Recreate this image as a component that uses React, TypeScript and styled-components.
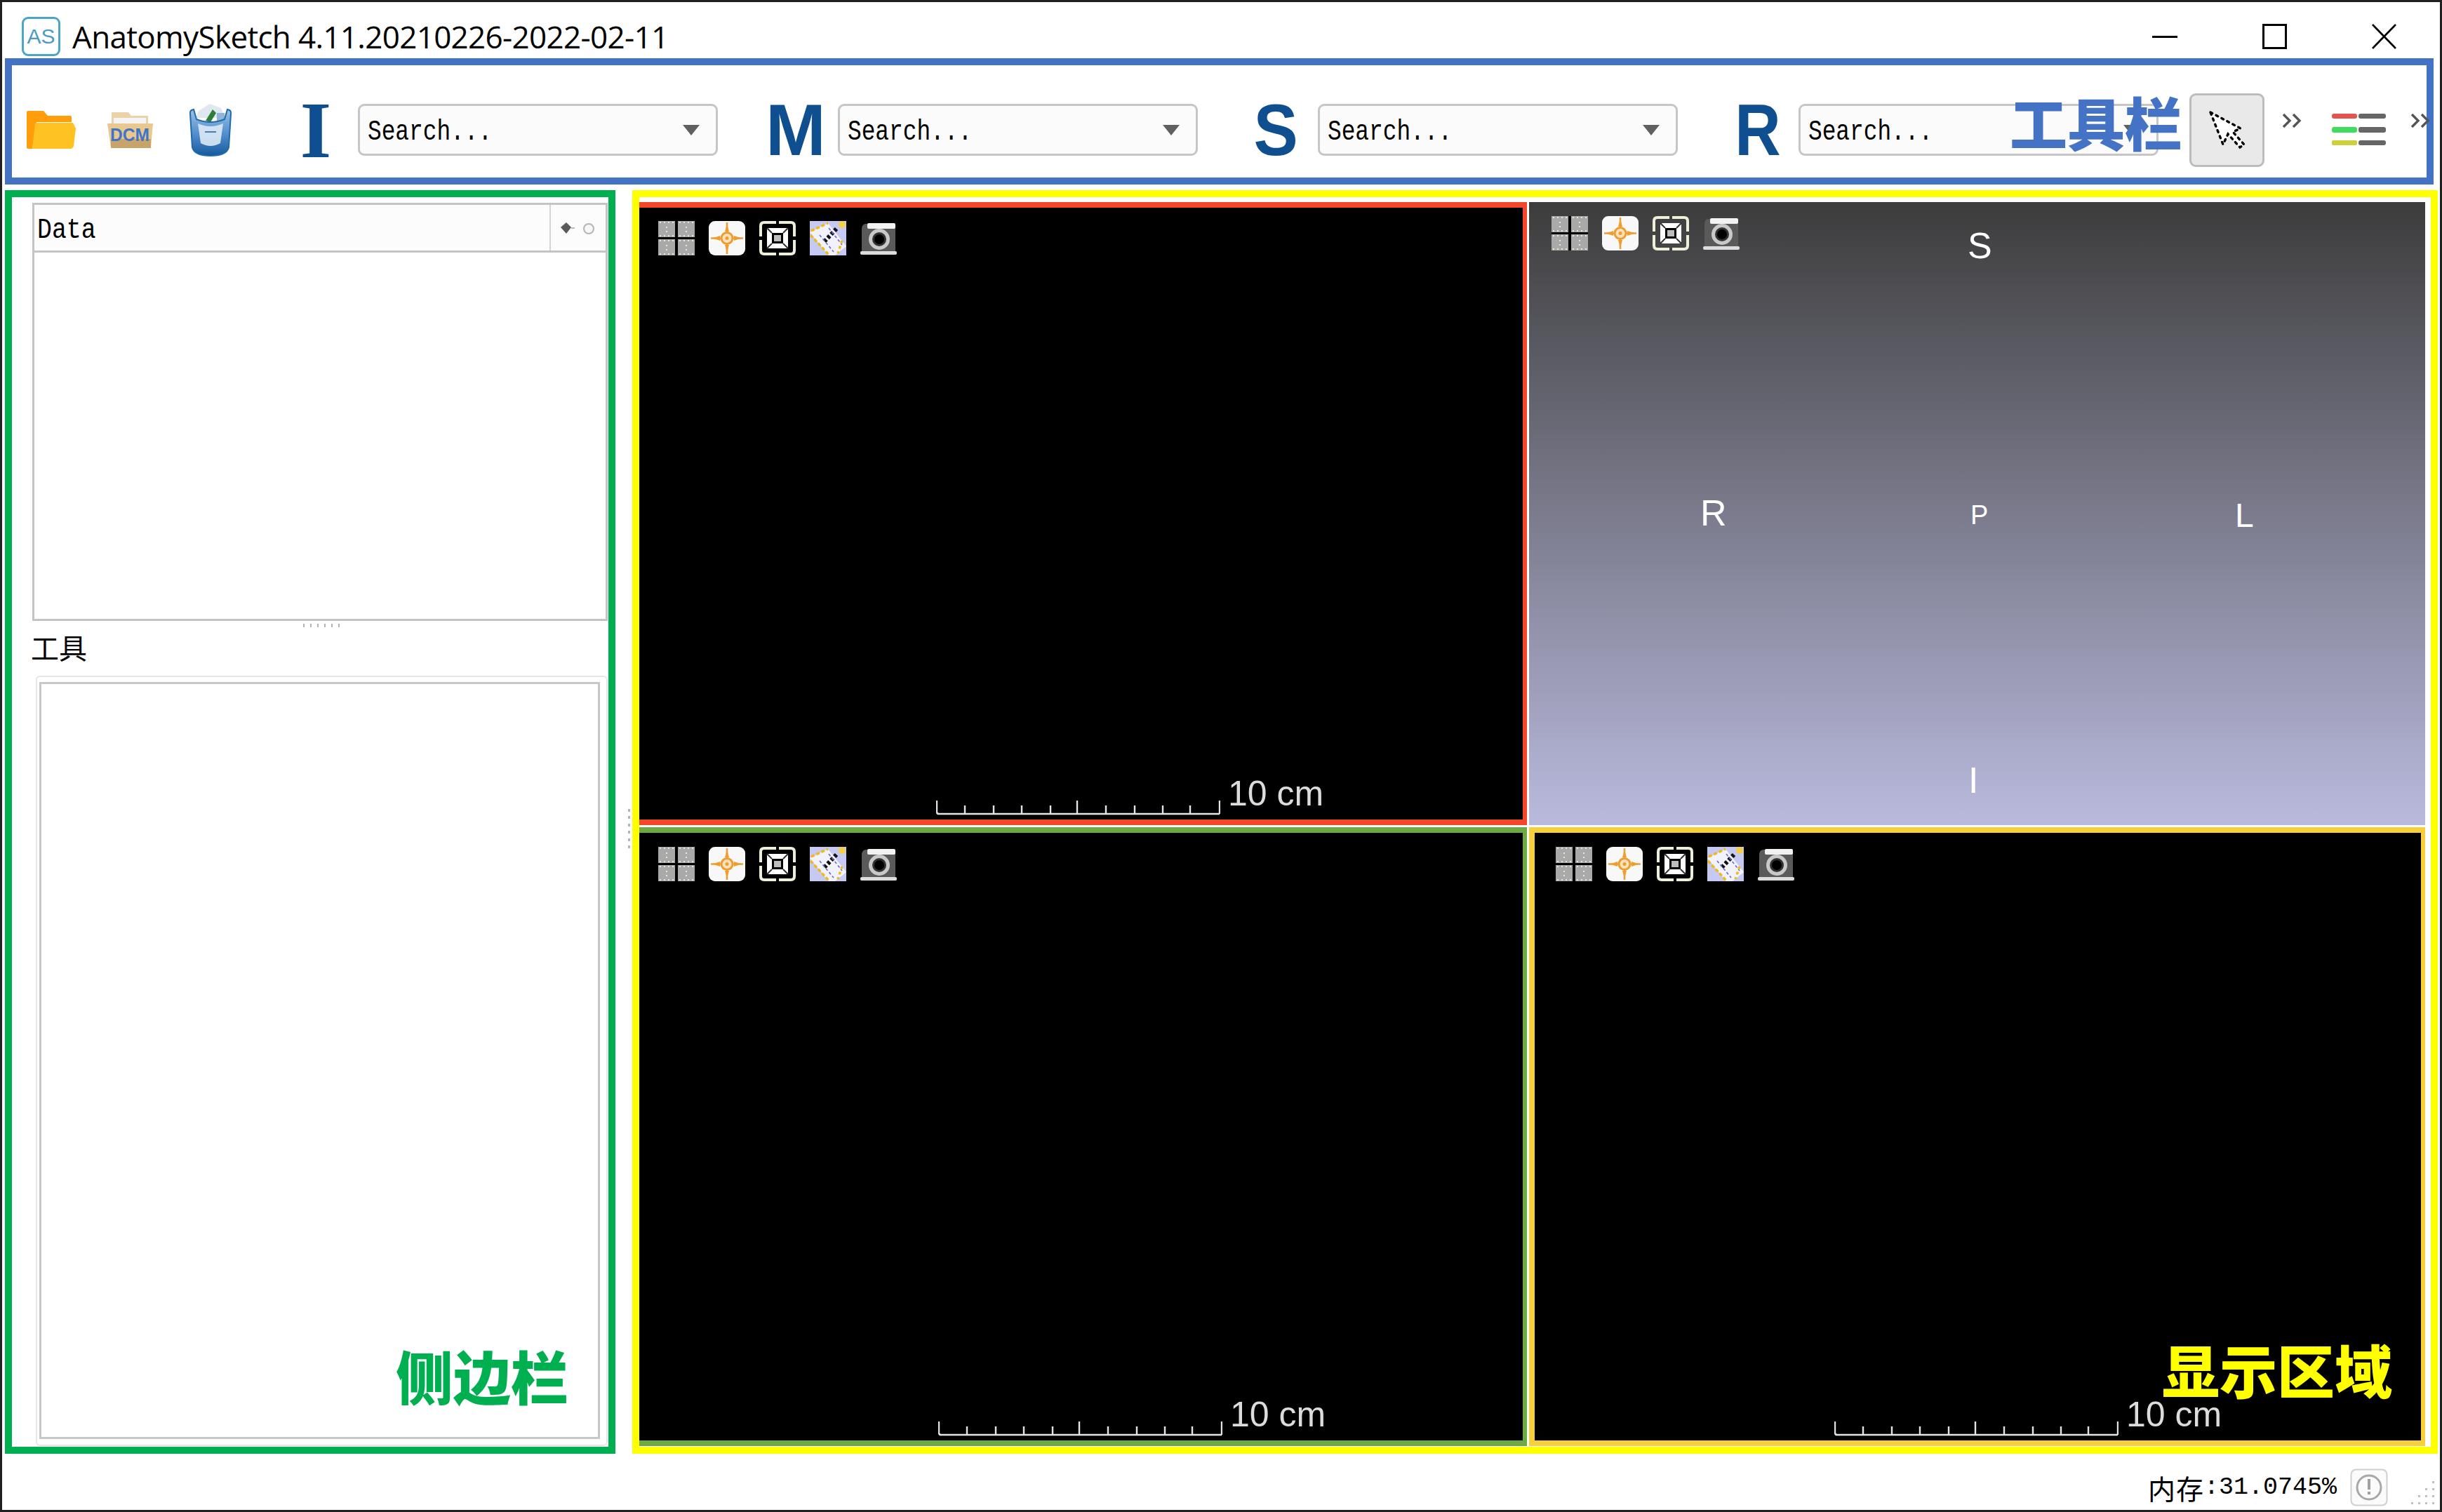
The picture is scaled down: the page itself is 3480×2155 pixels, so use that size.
import React from 'react';
import styled, { createGlobalStyle } from 'styled-components';

const GlobalStyle = createGlobalStyle`
  html, body {
    margin: 0;
    padding: 0;
    background: #fff;
  }
  * {
    box-sizing: border-box;
  }
`;

const cjk = `"Noto Sans CJK SC", sans-serif`;
const mono = `"Liberation Mono", "Noto Sans CJK SC", monospace`;

const Window = styled.div`
  position: relative;
  width: 3480px;
  height: 2155px;
  display: flex;
  flex-direction: column;
  background: #fff;
  border: 3px solid #202020;
  overflow: hidden;
`;

const TitleBar = styled.div`
  height: 80px;
  flex: none;
  display: flex;
  align-items: center;
  padding: 18px 0 0 28px;
  gap: 17px;
`;

const AppBadge = styled.div`
  width: 55px;
  height: 56px;
  border: 3px solid #4aa5c6;
  border-radius: 9px;
  display: flex;
  align-items: center;
  justify-content: center;
  color: #4a9cc4;
  font: 400 30px 'Liberation Sans', sans-serif;
`;

const TitleText = styled.div`
  font: 400 44px 'Open Sans', sans-serif;
  letter-spacing: -0.67px;
  color: #000;
  white-space: nowrap;
`;

const WindowButtons = styled.div`
  margin-left: auto;
  padding-right: 62px;
  display: flex;
  align-items: center;
  gap: 121px;
`;

const ToolbarFrame = styled.div`
  position: relative;
  height: 180px;
  flex: none;
  margin: 0 9px 0 4px;
  padding-top: 24px;
  border: 10px solid #4472c4;
  display: flex;
  align-items: center;
`;

const ToolSlot = styled.div<{ $before: number; $up?: number }>`
  flex: none;
  display: flex;
  align-items: center;
  justify-content: center;
  margin-left: ${p => p.$before}px;
  margin-bottom: ${p => p.$up || 0}px;
`;

const ToolLetter = styled.div<{ $before: number; $width: number; $squeeze: number; $serif?: boolean }>`
  flex: none;
  width: ${p => p.$width}px;
  height: 75px;
  margin-left: ${p => p.$before}px;
  display: flex;
  align-items: center;
  justify-content: center;
  font: 700 ${p => (p.$serif ? 114 : 103)}px/75px ${p => (p.$serif ? "'Liberation Serif'" : "'Liberation Sans'")}, sans-serif;
  color: #0f4f8f;
  transform: scaleX(${p => p.$squeeze});
`;

const Combo = styled.div<{ $before: number }>`
  flex: none;
  width: 513px;
  height: 74px;
  margin-left: ${p => p.$before}px;
  padding-left: 11px;
  display: flex;
  align-items: center;
  justify-content: space-between;
  background: #fbfbfb;
  border: 3px solid #c6c6c6;
  border-radius: 9px;
`;

const ComboText = styled.span`
  padding-top: 7px;
  font: 400 40px/1 ${mono};
  color: #000;
  transform: scaleX(0.82);
  transform-origin: left center;
  white-space: nowrap;
`;

const ComboArrow = styled.span`
  width: 0;
  height: 0;
  margin-right: 23px;
  border-left: 12px solid transparent;
  border-right: 12px solid transparent;
  border-top: 15px solid #606060;
`;

const PointerButton = styled.div`
  flex: none;
  width: 107px;
  height: 105px;
  margin-left: 44px;
  background: #e9e9e9;
  border: 3px solid #bcbcbc;
  border-radius: 9px;
`;

const ToolbarTag = styled.div`
  position: absolute;
  right: 348px;
  top: 39px;
  font: 900 82px/82px ${cjk};
  color: #4472c4;
  white-space: nowrap;
`;

const Main = styled.div`
  height: 1801px;
  flex: none;
  margin: 8px 3px 0 4px;
  display: grid;
  grid-template-columns: 870px 24px 2573px;
`;

const SideFrame = styled.div`
  position: relative;
  border: 10px solid #00b050;
  padding: 8px 1px 1px 29px;
  display: flex;
  flex-direction: column;
`;

const DataPanel = styled.div`
  height: 596px;
  flex: none;
  border: 3px solid #c4c4c4;
  background: #fff;
`;

const DataHeader = styled.div`
  height: 68px;
  display: flex;
  align-items: center;
  background: #fcfcfc;
  border-bottom: 3px solid #c4c4c4;
`;

const DataTitle = styled.div`
  flex: 1;
  height: 100%;
  padding: 8px 0 0 4px;
  display: flex;
  align-items: center;
  border-right: 2px solid #d4d4d4;
  font: 400 40px/1 ${mono};
  color: #000;
  span {
    display: inline-block;
    transform: scaleX(0.87);
    transform-origin: left center;
  }
`;

const DataTools = styled.div`
  width: 78px;
  display: flex;
  justify-content: center;
`;

const SplitRow = styled.div`
  height: 18px;
  flex: none;
  display: flex;
  justify-content: center;
  padding: 4px 0 0 8px;
`;

const HorizontalDots = styled.div`
  width: 56px;
  height: 5px;
  background: repeating-linear-gradient(to right, #b4b4b4 0 2px, transparent 2px 10px);
`;

const VerticalDots = styled.div`
  width: 3px;
  height: 56px;
  margin: 18px 0 0 14px;
  align-self: center;
  justify-self: center;
  background: repeating-linear-gradient(to bottom, #b4b4b4 0 4px, transparent 4px 10.5px);
`;

const ToolsLabel = styled.div`
  height: 43px;
  flex: none;
  margin: -2px 0 2px -2px;
  font: 400 40px/43px ${cjk};
  color: #000;
`;

const ToolsOuter = styled.div`
  flex: 1;
  margin: 17px 0 0 5px;
  padding: 7px 9px 8px 3px;
  border: 2px solid #e6e6e6;
  border-radius: 6px;
  display: flex;
`;

const ToolsInner = styled.div`
  flex: 1;
  border: 3px solid #c8c8c8;
  background: #fff;
`;

const SideTag = styled.div`
  position: absolute;
  right: 57px;
  bottom: 61px;
  font: 900 82px/82px ${cjk};
  color: #00b050;
  white-space: nowrap;
`;

const DisplayFrame = styled.div`
  position: relative;
  border: 10px solid #ffff00;
  padding: 7px 8px 1px 0;
  display: grid;
  grid-template-columns: 1265px 1277px;
  grid-template-rows: 888px 882px;
  column-gap: 3px;
  row-gap: 3px;
`;

const DisplayTag = styled.div`
  position: absolute;
  right: 55px;
  bottom: 70px;
  font: 900 82px/82px ${cjk};
  color: #ffff00;
  white-space: nowrap;
`;

const View = styled.div<{ $edge?: string; $leftEdge?: boolean }>`
  position: relative;
  background: #000;
  border-style: solid;
  border-color: ${p => p.$edge || 'transparent'};
  border-width: ${p => (p.$edge ? `8px 6px 8px ${p.$leftEdge ? 8 : 0}px` : '0')};
`;

const View3D = styled(View)`
  background: linear-gradient(to bottom, #3c3c3c, #babade);
`;

const ViewIcons = styled.div<{ $x: number; $y: number }>`
  position: absolute;
  left: ${p => p.$x}px;
  top: ${p => p.$y}px;
  display: flex;
  gap: 20px;
`;

const ScaleOverlay = styled.div<{ $x: number }>`
  position: absolute;
  left: ${p => p.$x}px;
  bottom: 6px;
  display: flex;
  align-items: flex-end;
  gap: 11px;
`;

const ScaleLabel = styled.div`
  font: 400 50px/50px 'Liberation Sans', sans-serif;
  color: #dcdcdc;
  margin-bottom: 6px;
  white-space: nowrap;
`;

const Orientation = styled.div<{ $x: number; $y: number; $size: number }>`
  position: absolute;
  left: ${p => p.$x}px;
  top: ${p => p.$y}px;
  font: 400 ${p => p.$size}px/1 'Liberation Sans', sans-serif;
  color: #fff;
`;

const StatusBar = styled.div`
  flex: 1;
  display: flex;
  align-items: center;
  justify-content: flex-end;
  position: relative;
  padding: 16px 74px 0 0;
`;

const MemoryText = styled.div`
  display: flex;
  align-items: center;
  color: #000;
  margin-right: 19px;
`;

const MemoryCjk = styled.span`
  font: 400 39px/1 ${cjk};
  letter-spacing: 1px;
`;

const MemoryValue = styled.span`
  font: 400 35px/1 ${mono};
`;

const SizeGrip = styled.svg`
  position: absolute;
  right: 5px;
  bottom: 7px;
`;

const FolderIcon = () => (
  <svg width="70" height="54" viewBox="0 0 70 54">
    <path d="M0 2 Q0 0 2 0 H24 L30 7 H62 Q64 7 64 9 V16 H14 L8 54 H2 Q0 54 0 52 Z" fill="#ff9d0a" />
    <path d="M12 19 Q12 17 14 17 H66 L70 25 L67 50 Q66 54 62 54 H8 Z" fill="#ffc222" />
  </svg>
);

const DcmIcon = () => (
  <svg width="65" height="54" viewBox="0 0 65 54">
    <path d="M6 2 H30 L34 7 H58 V22 H6 Z" fill="#ead3a6" />
    <rect x="9" y="10" width="46" height="9" fill="#f4f4f4" />
    <path d="M0 18 H65 L62 52 H5 Z" fill="#e8c88e" />
    <rect x="5" y="40" width="57" height="13" fill="#c9a46a" />
    <text x="32" y="43" textAnchor="middle" fontFamily="'Liberation Sans'" fontWeight="700" fontSize="26" textLength="56" lengthAdjust="spacingAndGlyphs" fill="#3f74c8">
      DCM
    </text>
  </svg>
);

const BinIcon = () => (
  <svg width="62" height="78" viewBox="0 0 62 78">
    <defs>
      <linearGradient id="binBody" x1="0" y1="0" x2="0" y2="1">
        <stop offset="0" stopColor="#9cc0e4" />
        <stop offset="0.55" stopColor="#4f8ccb" />
        <stop offset="1" stopColor="#165a9c" />
      </linearGradient>
    </defs>
    <path d="M14 12 L30 2 L46 8 L52 22 H10 Z" fill="#dfe8ef" />
    <path d="M24 26 L34 10 L39 15 L31 28 Z" fill="#2f7f3a" />
    <path d="M40 15 H51 V27 H40 Z" fill="#8fb6d8" />
    <path d="M2 16 Q1 11 7 10 L11 24 Q31 32 51 24 L55 10 Q61 11 60 16 L57 64 Q54 76 31 76 Q8 76 5 64 Z" fill="url(#binBody)" stroke="#1f6bab" strokeWidth="2" />
    <path d="M13 30 Q31 38 49 30 L45 58 Q31 66 17 58 Z" fill="#dce9f6" opacity="0.9" />
    <rect x="23" y="41" width="16" height="2" fill="#4d7fae" />
  </svg>
);

const MinimizeGlyph = () => (
  <svg width="36" height="36" viewBox="0 0 36 36">
    <rect x="0" y="17" width="36" height="3" fill="#000" />
  </svg>
);

const MaximizeGlyph = () => (
  <svg width="35" height="36" viewBox="0 0 35 36">
    <rect x="1.5" y="1.5" width="32" height="33" fill="none" stroke="#000" strokeWidth="3" />
  </svg>
);

const CloseGlyph = () => (
  <svg width="35" height="36" viewBox="0 0 35 36">
    <path d="M1 1 L34 35 M34 1 L1 35" stroke="#000" strokeWidth="2.6" />
  </svg>
);

const PointerGlyph = () => (
  <svg width="101" height="99" viewBox="3 3 101 99">
    <path
      d="M30 27 L73 50 L62 55 L78 73 L72 77 L55 58 L48 73 Z"
      fill="#fff"
      stroke="#000"
      strokeWidth="3.4"
      strokeLinecap="round"
      strokeDasharray="3 6"
    />
  </svg>
);

const Chevrons = () => (
  <svg width="28" height="22" viewBox="0 0 28 22">
    <path d="M2 2 L11 11 L2 20 M16 2 L25 11 L16 20" fill="none" stroke="#555" strokeWidth="3.4" />
  </svg>
);

const LayerBars = () => (
  <svg width="79" height="54" viewBox="0 0 79 54">
    <rect x="0" y="5" width="36" height="7" rx="3" fill="#e4534e" />
    <rect x="38" y="5" width="39" height="7" rx="3" fill="#666" />
    <rect x="0" y="24" width="36" height="8" rx="3" fill="#3fdc5e" />
    <rect x="38" y="24" width="39" height="8" rx="3" fill="#666" />
    <rect x="0" y="43" width="36" height="7" rx="2" fill="#cdd038" />
    <rect x="38" y="43" width="39" height="7" rx="3" fill="#666" />
  </svg>
);

const EyeToggle = () => (
  <svg width="50" height="22" viewBox="0 0 50 22">
    <path d="M0 10 L8 3 L15 10 L8 19 Z" fill="#5a5a5a" />
    <rect x="15" y="10" width="5" height="2" fill="#bbb" />
    <circle cx="40" cy="12" r="7" fill="#f7f7f7" stroke="#b5b5b5" strokeWidth="2" />
  </svg>
);

const InfoGlyph = () => (
  <svg width="54" height="54" viewBox="0 0 54 54">
    <rect x="1.5" y="1.5" width="51" height="51" rx="7" fill="#fbfbfb" stroke="#cfcfcf" strokeWidth="2" />
    <circle cx="27" cy="27" r="17" fill="none" stroke="#a8a8a8" strokeWidth="3" />
    <rect x="25" y="15" width="4" height="15" fill="#a0a0a0" />
    <rect x="25" y="33" width="4" height="4" fill="#a0a0a0" />
  </svg>
);

const GridIcon = ({ split }: { split?: boolean }) => {
  const cell = (x: number, y: number) => (
    <g key={`${x}-${y}`}>
      <rect x={x} y={y} width="24" height="23" fill="#a9a9a9" />
      {[3, 9, 15, 21].map(d => (
        <rect key={d} x={x + d - 1} y={y + 1} width="2" height="2" fill="#e6e6d2" />
      ))}
      {[3, 9, 15, 21].map(d => (
        <rect key={d} x={x + d - 1} y={y + 20} width="2" height="2" fill="#e6e6d2" />
      ))}
      <rect x={x + 11} y={y + 8} width="2" height="2" fill="#e6e6d2" />
      <rect x={x + 11} y={y + 14} width="2" height="2" fill="#e6e6d2" />
    </g>
  );
  return (
    <svg width="52" height="49" viewBox="0 0 52 49">
      {split && <path d="M26 0 V49 M0 24.5 H52" stroke="#000" strokeWidth="4" />}
      {cell(0, 0)}
      {cell(28, 0)}
      {cell(0, 26)}
      {cell(28, 26)}
    </svg>
  );
};

const TargetIcon = () => (
  <svg width="52" height="49" viewBox="0 0 52 49">
    <rect x="0" y="0" width="52" height="49" rx="9" fill="#f8f8f8" />
    <path d="M3 24.5 H49 M26 2 V47" stroke="#ef9d2e" strokeWidth="2.6" />
    <path d="M26 4 L29 15 H23 Z M26 45 L29 34 H23 Z M5 24.5 L16 21 V28 Z M47 24.5 L36 21 V28 Z" fill="#ef9d2e" />
    <circle cx="26" cy="24.5" r="8" fill="#f8e2c0" stroke="#ef9d2e" strokeWidth="3" />
    <circle cx="26" cy="24.5" r="2.5" fill="#ef9d2e" />
  </svg>
);

const FocusIcon = () => (
  <svg width="52" height="49" viewBox="0 0 52 49">
    <path d="M24 2 H7 Q2 2 2 7 V22 M28 2 H45 Q50 2 50 7 V22 M24 47 H7 Q2 47 2 42 V27 M28 47 H45 Q50 47 50 42 V27" fill="none" stroke="#efefd8" strokeWidth="4" />
    <rect x="11" y="10" width="30" height="29" rx="3" fill="#fff" />
    <rect x="18" y="17" width="16" height="15" fill="#000" />
    <rect x="21" y="20" width="10" height="9" fill="#bdbdbd" />
    <path d="M11 10 L18 17 M41 10 L34 17 M11 39 L18 32 M41 39 L34 32" stroke="#333" strokeWidth="2" />
  </svg>
);

const LayersIcon = () => (
  <svg width="52" height="49" viewBox="0 0 52 49">
    <rect x="0" y="0" width="52" height="49" fill="#c6c9f2" />
    <path d="M0 16 L26 3 L52 36 L36 49 H27 Z" fill="#f2f2fc" />
    <path d="M1 20 L28 49 M2 14 L26 3" stroke="#f2b90f" strokeWidth="3.4" strokeDasharray="5 3" />
    <path d="M38 11 L21 29" stroke="#111" strokeWidth="6" strokeDasharray="4 3" />
    <path d="M14 20 L34 44 M27 10 L46 34" stroke="#6a6ac8" strokeWidth="1.6" strokeDasharray="4 3" />
    <path d="M46 28 L40 46" stroke="#f2b90f" strokeWidth="3.4" strokeDasharray="4 4" />
    <circle cx="46" cy="5" r="5" fill="#f7cf44" />
  </svg>
);

const CameraIcon = () => (
  <svg width="52" height="49" viewBox="0 0 52 49">
    <path d="M2 12 Q2 4 8 4 H44 Q50 4 50 12 V44 H2 Z" fill="#5a5a5a" />
    <rect x="10" y="3" width="40" height="8" rx="2" fill="#f2f2f2" />
    <rect x="0" y="43" width="52" height="5" rx="2" fill="#dcdcdc" />
    <circle cx="27" cy="26" r="15" fill="#c9c9c9" />
    <circle cx="27" cy="26" r="10" fill="#333" />
    <circle cx="27" cy="26" r="7" fill="#000" />
  </svg>
);

const ScaleBarGlyph = () => (
  <svg width="405" height="21" viewBox="0 0 405 21">
    <path
      d="M1 0 V16 Q1 19 4 19 H404 M404 0 V19 M41 7 V19 M82 7 V19 M122 7 V19 M163 7 V19 M201 0 V19 M242 7 V19 M283 7 V19 M323 7 V19 M362 7 V19"
      fill="none"
      stroke="#e4e4e4"
      strokeWidth="2.4"
    />
  </svg>
);

const ViewToolset = ({ x, y, volume }: { x: number; y: number; volume?: boolean }) => (
  <ViewIcons $x={x} $y={y}>
    <GridIcon split={volume} />
    <TargetIcon />
    <FocusIcon />
    {!volume && <LayersIcon />}
    <CameraIcon />
  </ViewIcons>
);

const Scale = ({ x }: { x: number }) => (
  <ScaleOverlay $x={x}>
    <ScaleBarGlyph />
    <ScaleLabel>10 cm</ScaleLabel>
  </ScaleOverlay>
);

export default function App() {
  return (
    <>
      <GlobalStyle />
      <Window>
        <TitleBar>
          <AppBadge>AS</AppBadge>
          <TitleText>AnatomySketch 4.11.20210226-2022-02-11</TitleText>
          <WindowButtons>
            <MinimizeGlyph />
            <MaximizeGlyph />
            <CloseGlyph />
          </WindowButtons>
        </TitleBar>

        <ToolbarFrame>
          <ToolSlot $before={21}>
            <FolderIcon />
          </ToolSlot>
          <ToolSlot $before={45}>
            <DcmIcon />
          </ToolSlot>
          <ToolSlot $before={51}>
            <BinIcon />
          </ToolSlot>
          <ToolLetter $before={101} $width={36} $squeeze={1} $serif>
            I
          </ToolLetter>
          <Combo $before={42}>
            <ComboText>Search...</ComboText>
            <ComboArrow />
          </Combo>
          <ToolLetter $before={71} $width={80} $squeeze={1}>
            M
          </ToolLetter>
          <Combo $before={20}>
            <ComboText>Search...</ComboText>
            <ComboArrow />
          </Combo>
          <ToolLetter $before={80} $width={62} $squeeze={0.92}>
            S
          </ToolLetter>
          <Combo $before={29}>
            <ComboText>Search...</ComboText>
            <ComboArrow />
          </Combo>
          <ToolLetter $before={84} $width={60} $squeeze={0.88}>
            R
          </ToolLetter>
          <Combo $before={28}>
            <ComboText>Search...</ComboText>
            <ComboArrow />
          </Combo>
          <PointerButton>
            <PointerGlyph />
          </PointerButton>
          <ToolSlot $before={25} $up={26}>
            <Chevrons />
          </ToolSlot>
          <ToolSlot $before={43} $up={2}>
            <LayerBars />
          </ToolSlot>
          <ToolSlot $before={33} $up={26}>
            <Chevrons />
          </ToolSlot>
          <ToolbarTag>工具栏</ToolbarTag>
        </ToolbarFrame>

        <Main>
          <SideFrame>
            <DataPanel>
              <DataHeader>
                <DataTitle>
                  <span>Data</span>
                </DataTitle>
                <DataTools>
                  <EyeToggle />
                </DataTools>
              </DataHeader>
            </DataPanel>
            <SplitRow>
              <HorizontalDots />
            </SplitRow>
            <ToolsLabel>工具</ToolsLabel>
            <ToolsOuter>
              <ToolsInner />
            </ToolsOuter>
            <SideTag>侧边栏</SideTag>
          </SideFrame>

          <VerticalDots />

          <DisplayFrame>
            <View $edge="#f4472a">
              <ViewToolset x={27} y={19} />
              <Scale x={423} />
            </View>
            <View3D>
              <ViewToolset x={32} y={20} volume />
              <Orientation $x={625} $y={36} $size={52}>
                S
              </Orientation>
              <Orientation $x={244} $y={417} $size={52}>
                R
              </Orientation>
              <Orientation $x={629} $y={427} $size={38}>
                P
              </Orientation>
              <Orientation $x={1006} $y={423} $size={48}>
                L
              </Orientation>
              <Orientation $x={626} $y={798} $size={52}>
                I
              </Orientation>
            </View3D>
            <View $edge="#6cab42">
              <ViewToolset x={27} y={20} />
              <Scale x={426} />
            </View>
            <View $edge="#f7cf3a" $leftEdge>
              <ViewToolset x={30} y={20} />
              <Scale x={427} />
            </View>
            <DisplayTag>显示区域</DisplayTag>
          </DisplayFrame>
        </Main>

        <StatusBar>
          <MemoryText>
            <MemoryCjk>内存</MemoryCjk>
            <MemoryValue>:31.0745%</MemoryValue>
          </MemoryText>
          <InfoGlyph />
          <SizeGrip width="38" height="36" viewBox="0 0 38 36">
            {[
              [32, 2],
              [22, 12],
              [32, 12],
              [12, 22],
              [22, 22],
              [32, 22],
              [2, 32],
              [12, 32],
              [22, 32],
              [32, 32],
            ].map(([x, y]) => (
              <rect key={`${x}-${y}`} x={x} y={y} width="3" height="3" fill="#c0c0c0" />
            ))}
          </SizeGrip>
        </StatusBar>
      </Window>
    </>
  );
}
